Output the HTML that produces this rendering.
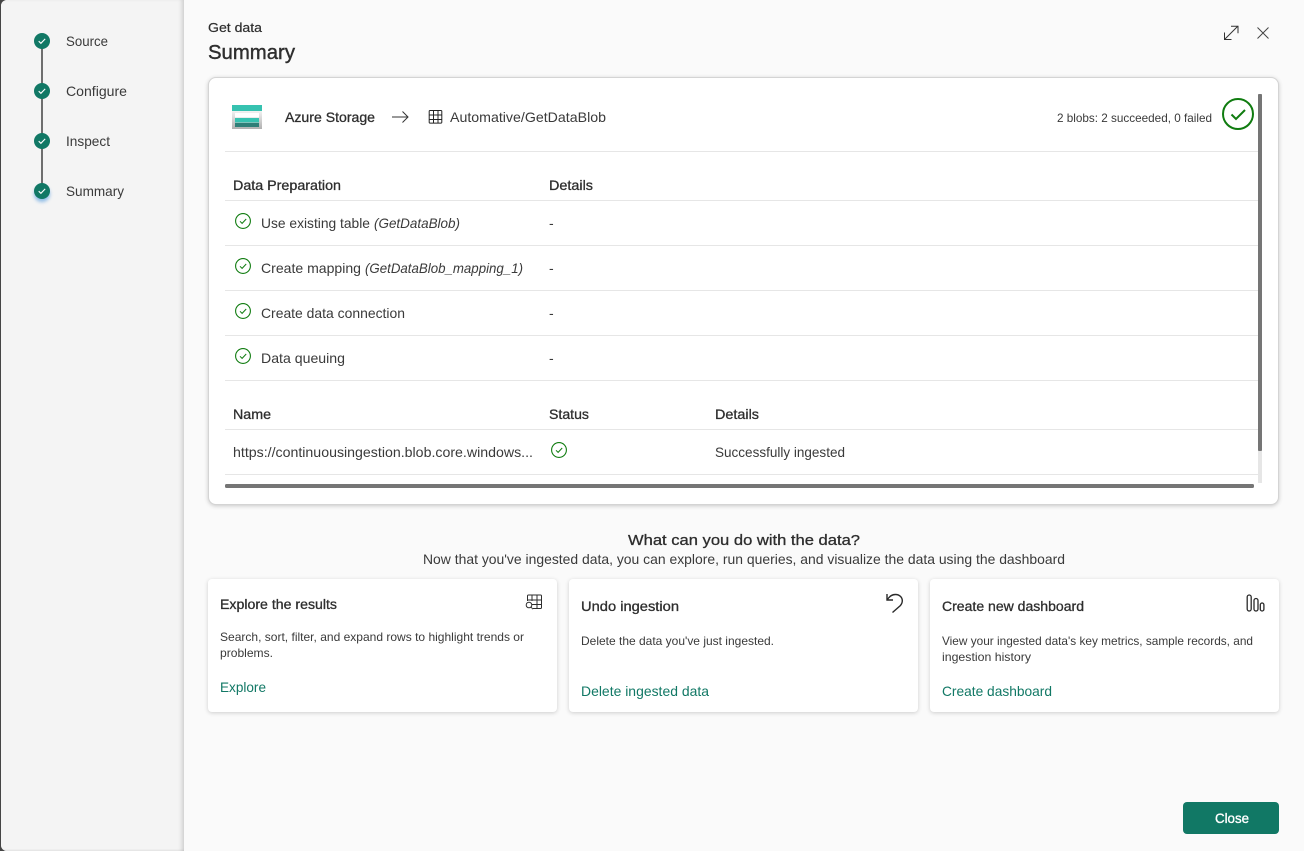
<!DOCTYPE html>
<html lang="en"><head><meta charset="utf-8"><title>Get data - Summary</title>
<style>
html,body{margin:0;padding:0;width:1304px;height:851px;overflow:hidden;background:#454545}
#dlg{position:absolute;left:1px;top:0;width:1303px;height:851px;background:#fafafa;border-radius:6px 0 0 6px;overflow:hidden}
#side{position:absolute;left:0;top:0;width:183px;height:851px;background:#f4f4f4;box-shadow:inset -4px 0 4px -2px rgba(0,0,0,.16),inset 0 -2px 2px -1px rgba(0,0,0,.06)}
.box{position:absolute;background:#fff}
#main{left:208px;top:77px;width:1069px;height:426px;border:1px solid #d4d4d4;border-radius:8px;box-shadow:0 1px 4px rgba(0,0,0,.2)}
.card{top:579px;height:133px;width:349px;border-radius:4px;box-shadow:0 1px 4px rgba(0,0,0,.18)}
svg{position:absolute;left:0;top:0}
text{font-family:"Liberation Sans",sans-serif;font-size:14px;fill:#3a3a3a}
.sb{stroke:#2e2e2e;stroke-width:.3px;fill:#2e2e2e}
.l{fill:#117865}
.d{font-size:12px;fill:#3a3a3a}
</style></head><body>
<div id="dlg"><div id="side"></div></div>
<div class="box" id="main"></div>
<div class="box card" style="left:208px"></div>
<div class="box card" style="left:569px"></div>
<div class="box card" style="left:930px"></div>
<svg width="1304" height="851" viewBox="0 0 1304 851" xmlns="http://www.w3.org/2000/svg">
<defs><filter id="g" x="-50%" y="-50%" width="200%" height="200%"><feGaussianBlur stdDeviation="1.8"/></filter>
<linearGradient id="st" x1="0" y1="0" x2="0" y2="1"><stop offset="0" stop-color="#f2f2f2"/><stop offset="1" stop-color="#b0b0b0"/></linearGradient>
<symbol id="ck" viewBox="0 0 16 16" overflow="visible"><circle cx="8" cy="8" r="7.4" fill="none" stroke="#107c10" stroke-width="1.1"/><path d="M5 8.300l2.100 2.100L11.200 6" fill="none" stroke="#107c10" stroke-width="1"/></symbol></defs>

<!-- stepper -->
<circle cx="42" cy="194" r="8" fill="#5a9fe0" opacity=".65" filter="url(#g)"/>
<rect x="41" y="41" width="2" height="150" fill="#6e6e6e"/>
<g fill="#117865"><circle cx="42" cy="41" r="8"/><circle cx="42" cy="91" r="8"/><circle cx="42" cy="141" r="8"/><circle cx="42" cy="191" r="8"/></g>
<g fill="none" stroke="#fff" stroke-width="1.1"><path d="M38.700 41.200l2.200 2.100 4.300-4.400"/><path d="M38.700 91.200l2.200 2.100 4.300-4.400"/><path d="M38.700 141.200l2.200 2.100 4.300-4.400"/><path d="M38.700 191.200l2.200 2.100 4.300-4.400"/></g>
<text x="66" y="46" textLength="42" lengthAdjust="spacingAndGlyphs">Source</text>
<text x="66" y="96" textLength="61" lengthAdjust="spacingAndGlyphs">Configure</text>
<text x="66" y="146" textLength="44" lengthAdjust="spacingAndGlyphs">Inspect</text>
<text x="66" y="196" textLength="58" lengthAdjust="spacingAndGlyphs">Summary</text>

<!-- header -->
<text x="208" y="32" class="sb" style="font-size:13px;stroke-width:.2px" textLength="54" lengthAdjust="spacingAndGlyphs">Get data</text>
<text x="208" y="59" class="sb" style="font-size:20px;stroke-width:.4px" textLength="87" lengthAdjust="spacingAndGlyphs">Summary</text>
<path d="M1224.500 39.500L1238 26M1231 26.200h7v7M1224.500 32.500v7h7" fill="none" stroke="#333" stroke-width="1"/>
<path d="M1257.500 27.500l11 11M1268.500 27.500l-11 11" fill="none" stroke="#444" stroke-width="1"/>

<!-- storage row -->
<rect x="232" y="111" width="30" height="18" fill="url(#st)"/>
<rect x="232" y="105" width="30" height="6" fill="#36c2b0"/>
<rect x="235" y="113" width="24" height="4.500" fill="#fff"/>
<rect x="235" y="118" width="24" height="4.500" fill="#36c2b0"/>
<rect x="235" y="123" width="24" height="4" fill="#2f7f78"/>
<text x="285" y="122" class="sb" textLength="90" lengthAdjust="spacingAndGlyphs">Azure Storage</text>
<path d="M392 117h16M402.500 111.500l5.500 5.500-5.500 5.500" fill="none" stroke="#333" stroke-width="1"/>
<path d="M430 110.500h11a.8.8 0 0 1 .8.8v11a.8.8 0 0 1-.8.8h-11a.8.8 0 0 1-.8-.8v-11a.8.8 0 0 1 .8-.8zM433.500 110.500v13M438 110.500v13M429.500 115h12M429.500 119.500h12" fill="none" stroke="#242424" stroke-width="1"/>
<text x="450" y="122" textLength="156" lengthAdjust="spacingAndGlyphs">Automative/GetDataBlob</text>
<text x="1057" y="122" class="d" textLength="155" lengthAdjust="spacingAndGlyphs">2 blobs: 2 succeeded, 0 failed</text>
<circle cx="1238" cy="114" r="15" fill="#fff" stroke="#107c10" stroke-width="2"/>
<path d="M1231.500 114.500l4.500 4.500 9-9" fill="none" stroke="#107c10" stroke-width="2"/>

<!-- table lines -->
<g fill="#e6e6e6"><rect x="225" y="151" width="1033" height="1"/><rect x="225" y="200" width="1033" height="1"/><rect x="225" y="245" width="1033" height="1"/><rect x="225" y="290" width="1033" height="1"/><rect x="225" y="335" width="1033" height="1"/><rect x="225" y="380" width="1033" height="1"/><rect x="225" y="429" width="1033" height="1"/><rect x="225" y="474" width="1033" height="1"/></g>

<text x="233" y="190" class="sb" textLength="108" lengthAdjust="spacingAndGlyphs">Data Preparation</text>
<text x="549" y="190" class="sb" textLength="44" lengthAdjust="spacingAndGlyphs">Details</text>

<use href="#ck" x="235" y="213" width="16" height="16"/>
<use href="#ck" x="235" y="258" width="16" height="16"/>
<use href="#ck" x="235" y="303" width="16" height="16"/>
<use href="#ck" x="235" y="348" width="16" height="16"/>
<use href="#ck" x="551" y="442" width="16" height="16"/>

<text x="261" y="228" textLength="109" lengthAdjust="spacingAndGlyphs">Use existing table</text>
<text x="374" y="228" font-style="italic" textLength="86" lengthAdjust="spacingAndGlyphs">(GetDataBlob)</text>
<text x="261" y="273" textLength="100" lengthAdjust="spacingAndGlyphs">Create mapping</text>
<text x="365" y="273" font-style="italic" textLength="158" lengthAdjust="spacingAndGlyphs">(GetDataBlob_mapping_1)</text>
<text x="261" y="318" textLength="144" lengthAdjust="spacingAndGlyphs">Create data connection</text>
<text x="261" y="363" textLength="84" lengthAdjust="spacingAndGlyphs">Data queuing</text>
<text x="549" y="228">-</text><text x="549" y="273">-</text><text x="549" y="318">-</text><text x="549" y="363">-</text>

<text x="233" y="419" class="sb" textLength="38" lengthAdjust="spacingAndGlyphs">Name</text>
<text x="549" y="419" class="sb" textLength="40" lengthAdjust="spacingAndGlyphs">Status</text>
<text x="715" y="419" class="sb" textLength="44" lengthAdjust="spacingAndGlyphs">Details</text>
<text x="233" y="457" textLength="300" lengthAdjust="spacingAndGlyphs">https://continuousingestion.blob.core.windows...</text>
<text x="715" y="457" textLength="130" lengthAdjust="spacingAndGlyphs">Successfully ingested</text>

<!-- scrollbars -->
<rect x="1258" y="94" width="4" height="389" fill="#e6e6e6"/>
<rect x="1258" y="94" width="4" height="357" rx="1" fill="#757575"/>
<rect x="225" y="484" width="1029" height="4" rx="1.500" fill="#757575"/>

<!-- what can you do -->
<text x="628" y="545" class="sb" style="font-size:15px" textLength="232" lengthAdjust="spacingAndGlyphs">What can you do with the data?</text>
<text x="423" y="564" textLength="642" lengthAdjust="spacingAndGlyphs">Now that you've ingested data, you can explore, run queries, and visualize the data using the dashboard</text>

<!-- card 1 -->
<text x="220" y="609" class="sb" style="font-size:13.500px" textLength="117" lengthAdjust="spacingAndGlyphs">Explore the results</text>
<path d="M527.500 601v-5a1 1 0 0 1 1-1h12a1 1 0 0 1 1 1v11.500a1 1 0 0 1-1 1H533M532 595v6M537 595v13.500M527.500 600h14M532 604.500h9.500" fill="none" stroke="#2e2e2e" stroke-width="1"/>
<circle cx="529" cy="605" r="2.800" fill="#fff" stroke="#2e2e2e" stroke-width="1"/><path d="M531 607.200l2 2" stroke="#2e2e2e" stroke-width="1"/>
<text x="220" y="641" class="d" textLength="304" lengthAdjust="spacingAndGlyphs">Search, sort, filter, and expand rows to highlight trends or</text>
<text x="220" y="657" class="d" textLength="53" lengthAdjust="spacingAndGlyphs">problems.</text>
<text x="220" y="692" class="l" textLength="46" lengthAdjust="spacingAndGlyphs">Explore</text>

<!-- card 2 -->
<text x="581" y="611" class="sb" style="font-size:13.500px" textLength="98" lengthAdjust="spacingAndGlyphs">Undo ingestion</text>
<path d="M887 594v6h6M887.500 599.500c1.800-3 4.500-5 8-5 4.200 0 6.800 3 6.800 6.300 0 1.900-.8 3.500-2 4.800L892.500 612.500" fill="none" stroke="#2a2a2a" stroke-width="1.400"/>
<text x="581" y="645" class="d" textLength="193" lengthAdjust="spacingAndGlyphs">Delete the data you've just ingested.</text>
<text x="581" y="696" class="l" textLength="128" lengthAdjust="spacingAndGlyphs">Delete ingested data</text>

<!-- card 3 -->
<text x="942" y="611" class="sb" style="font-size:13.500px" textLength="142" lengthAdjust="spacingAndGlyphs">Create new dashboard</text>
<g fill="none" stroke="#2a2a2a" stroke-width="1.300"><rect x="1247.200" y="595" width="4" height="16" rx="2"/><rect x="1254" y="598.500" width="4" height="12.500" rx="2"/><rect x="1260.300" y="603" width="3.600" height="8" rx="1.800"/></g>
<text x="942" y="645" class="d" textLength="311" lengthAdjust="spacingAndGlyphs">View your ingested data's key metrics, sample records, and</text>
<text x="942" y="661" class="d" textLength="89" lengthAdjust="spacingAndGlyphs">ingestion history</text>
<text x="942" y="696" class="l" textLength="110" lengthAdjust="spacingAndGlyphs">Create dashboard</text>

<!-- close -->
<rect x="1183" y="802" width="96" height="32" rx="4" fill="#117865"/>
<text x="1215" y="823" style="fill:#fff;stroke:#fff;stroke-width:.35px" textLength="34" lengthAdjust="spacingAndGlyphs">Close</text>
</svg>
</body></html>
